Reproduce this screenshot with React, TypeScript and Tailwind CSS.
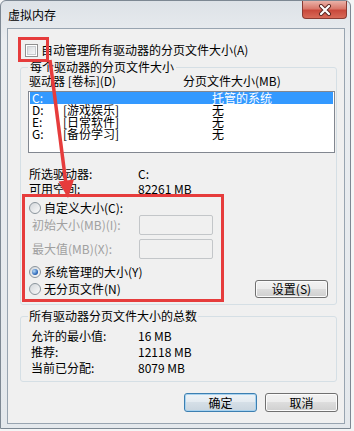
import React from "react";

const Radio = ({ checked }: { checked?: boolean }) => (
  <span className="flex h-[12px] w-[12px] shrink-0 items-center justify-center rounded-full border border-[#8a949c] bg-[linear-gradient(135deg,#d2d6da,#fbfbfb)]">
    {checked && (
      <span className="h-[6px] w-[6px] rounded-full bg-[radial-gradient(circle_at_35%_35%,#b8dcf8,#2a66b8_65%,#1a4a8e)]" />
    )}
  </span>
);

const Btn = ({ children, def }: { children: React.ReactNode; def?: boolean }) => (
  <div
    className={
      def
        ? "flex h-[19px] w-[73px] items-center justify-center rounded-[3px] border border-[#3c7fb1] bg-[linear-gradient(#eef3f7_0%,#e3eaf0_50%,#d5dfe7_50%,#c9d5df_100%)] shadow-[inset_0_0_0_1px_#a8d2ef]"
        : "flex h-[19px] w-[73px] items-center justify-center rounded-[3px] border border-[#707070] bg-[linear-gradient(#f2f2f2_0%,#ebebeb_50%,#dddddd_50%,#cfcfcf_100%)] shadow-[inset_0_0_0_1px_#fbfbfb]"
    }
  >
    {children}
  </div>
);

const rows = [
  { d: "D:", l: "[游戏娱乐]", v: "无" },
  { d: "E:", l: "[日常软件]", v: "无" },
  { d: "G:", l: "[备份学习]", v: "无" },
];

export default function App() {
  return (
    <div className="relative h-[431px] w-[354px] overflow-hidden bg-[#f4f5f6] font-['Noto_Sans_CJK_SC','Liberation_Sans',sans-serif] text-[12px] leading-[14px] text-black">
      <div className="flex h-[429px] w-[351px] flex-col rounded-t-[6px] border border-[#7d8893] bg-[linear-gradient(#dde2e7,#eaedf0_40px,#e4e8ec)]">
        {/* title bar */}
        <div className="flex h-[27px] items-start justify-between">
          <span className="ml-[7px] mt-[7px] text-[12px] leading-[14px]">虚拟内存</span>
          <div className="mr-[3px] flex h-[18px] w-[45px] items-center justify-center rounded-b-[4px] border border-t-0 border-[#8a3b33] bg-[linear-gradient(#eab2a8_0%,#d9786b_45%,#c9493c_55%,#d86a58_100%)]">
            <svg width="14" height="12" viewBox="0 0 14 12">
              <path d="M3 2 L11 10 M11 2 L3 10" stroke="#5a2620" strokeWidth="4" strokeLinecap="round" />
              <path d="M3 2 L11 10 M11 2 L3 10" stroke="#ffffff" strokeWidth="2.2" strokeLinecap="round" />
            </svg>
          </div>
        </div>

        {/* client area */}
        <div className="ml-[6px] flex h-[396px] w-[338px] flex-col border border-[#98a4b0] bg-[#f0f0f0]">
          {/* auto manage checkbox */}
          <div className="mt-[14px] flex h-[14px] items-center pl-[17px]">
            <span className="flex h-[13px] w-[13px] shrink-0 items-center justify-center border border-[#8f8f8f] bg-white">
              <span className="h-[9px] w-[9px] border border-[#c8ccd0] bg-[linear-gradient(135deg,#d8dbde,#f6f7f8)]" />
            </span>
            <span className="ml-[3px]">自动管理所有驱动器的分页文件大小(A)</span>
          </div>

          {/* group 1 */}
          <fieldset className="ml-[12px] mt-[3px] w-[317px] rounded-[3px] border border-[#d5dfe5]">
            <legend className="ml-[7px] px-[2px] leading-[14px]">每个驱动器的分页文件大小</legend>
            <div className="flex flex-col">
              <div className="flex h-[14px] items-center pl-[8px]">
                <span className="w-[154px]">驱动器 [卷标](D)</span>
                <span>分页文件大小(MB)</span>
              </div>
              <div className="ml-[7px] mt-[3px] flex h-[62px] w-[307px] flex-col border border-[#828790] bg-white leading-[12px]">
                <div className="mx-[1px] flex h-[12px] items-center bg-[#3399ff] pl-[2px] text-white">
                  <span className="w-[31px]">C:</span>
                  <span className="w-[149px]"></span>
                  <span>托管的系统</span>
                </div>
                {rows.map((r) => (
                  <div key={r.d} className="mx-[1px] flex h-[12px] items-center pl-[2px]">
                    <span className="w-[31px]">{r.d}</span>
                    <span className="w-[149px]">{r.l}</span>
                    <span>{r.v}</span>
                  </div>
                ))}
              </div>

              <div className="mt-[14px] flex h-[14px] items-center pl-[8px]">
                <span className="w-[109px]">所选驱动器:</span>
                <span>C:</span>
              </div>
              <div className="mt-[1px] flex h-[14px] items-center pl-[8px]">
                <span className="w-[109px]">可用空间:</span>
                <span>82261 MB</span>
              </div>

              <div className="mt-[5px] flex h-[14px] items-center pl-[8px]">
                <Radio />
                <span className="ml-[3px]">自定义大小(C):</span>
              </div>
              <div className="flex h-[20px] items-center pl-[11px] text-[#a0a0a0]">
                <span className="w-[107px]">初始大小(MB)(I):</span>
                <div className="h-[20px] w-[74px] rounded-[2px] border border-[#c3c6c9] bg-[#f0f0f0]" />
              </div>
              <div className="mt-[4px] flex h-[20px] items-center pl-[11px] text-[#a0a0a0]">
                <span className="w-[107px]">最大值(MB)(X):</span>
                <div className="h-[20px] w-[74px] rounded-[2px] border border-[#c3c6c9] bg-[#f0f0f0]" />
              </div>
              <div className="mt-[6px] flex h-[14px] items-center pl-[8px]">
                <Radio checked />
                <span className="ml-[3px]">系统管理的大小(Y)</span>
              </div>
              <div className="mt-[1px] flex h-[18px] items-center justify-between pl-[8px] pr-[8px]">
                <div className="flex items-center">
                  <Radio />
                  <span className="ml-[3px]">无分页文件(N)</span>
                </div>
                <div className="flex h-[18px] w-[73px] items-center justify-center rounded-[3px] border border-[#707070] bg-[linear-gradient(#f2f2f2_0%,#ebebeb_50%,#dddddd_50%,#cfcfcf_100%)] shadow-[inset_0_0_0_1px_#fbfbfb]">
                  设置(S)
                </div>
              </div>
              <div className="h-[6px]" />
            </div>
          </fieldset>

          {/* group 2 */}
          <fieldset className="ml-[12px] mt-[4px] w-[317px] rounded-[3px] border border-[#d5dfe5]">
            <legend className="ml-[7px] px-[1px] leading-[14px]">所有驱动器分页文件大小的总数</legend>
            <div className="flex flex-col pb-[5px]">
              <div className="mt-[5px] flex h-[16px] items-center pl-[10px]">
                <span className="w-[107px]">允许的最小值:</span>
                <span>16 MB</span>
              </div>
              <div className="flex h-[16px] items-center pl-[10px]">
                <span className="w-[107px]">推荐:</span>
                <span>12118 MB</span>
              </div>
              <div className="flex h-[16px] items-center pl-[10px]">
                <span className="w-[107px]">当前已分配:</span>
                <span>8079 MB</span>
              </div>
            </div>
          </fieldset>

          {/* buttons */}
          <div className="mt-[11px] flex justify-end gap-[8px] pr-[6px]">
            <Btn def>确定</Btn>
            <Btn>取消</Btn>
          </div>
        </div>
      </div>

      {/* annotations */}
      <div className="pointer-events-none absolute left-[18px] top-[37px] h-[25px] w-[31px] border-[3px] border-[#e63c3c]" />
      <div className="pointer-events-none absolute left-[22px] top-[194px] h-[108px] w-[202px] border-[3px] border-[#e63c3c]" />
      <svg className="pointer-events-none absolute left-0 top-0" width="354" height="431" viewBox="0 0 354 431">
        <line x1="50" y1="60" x2="66" y2="184" stroke="#e63c3c" strokeWidth="3.5" />
        <polygon points="68,198 58.5,181.5 74,179.5" fill="#e63c3c" />
      </svg>
    </div>
  );
}
